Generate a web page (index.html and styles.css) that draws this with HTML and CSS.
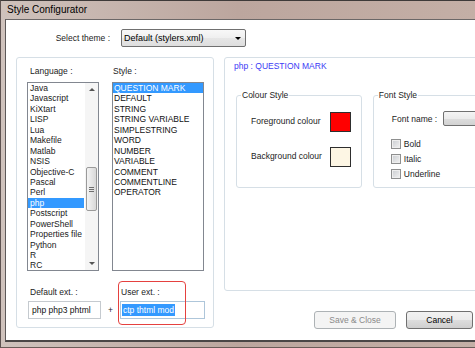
FILE: index.html
```html
<!DOCTYPE html>
<html lang="en">
<head>
  <meta charset="UTF-8" />
  <title>Style Configurator</title>
  <link rel="stylesheet" href="styles.css">
</head>
<body>
  <div class="window">
    <div class="titlebar">Style Configurator</div>
    <div class="client">

      <div class="theme-row">
        <label class="theme-label">Select theme :</label>
        <div class="combo">
          <span>Default (stylers.xml)</span>
          <span class="combo-arrow"></span>
        </div>
      </div>

      <div class="main">
        <div class="panel left-panel">
          <div class="lists">
            <div class="list-label lang-label">Language :</div>
            <div class="list-label style-label">Style :</div>

            <div class="listbox lang-list">
              <ul class="items">
                <li>Java</li>
                <li>Javascript</li>
                <li>KiXtart</li>
                <li>LISP</li>
                <li>Lua</li>
                <li>Makefile</li>
                <li>Matlab</li>
                <li>NSIS</li>
                <li>Objective-C</li>
                <li>Pascal</li>
                <li>Perl</li>
                <li class="sel">php</li>
                <li>Postscript</li>
                <li>PowerShell</li>
                <li>Properties file</li>
                <li>Python</li>
                <li>R</li>
                <li>RC</li>
              </ul>
              <div class="scrollbar">
                <span class="arrow arrow-up"></span>
                <span class="thumb"><span class="grip"></span></span>
                <span class="track-rest"></span>
                <span class="arrow arrow-down"></span>
              </div>
            </div>

            <div class="listbox style-list">
              <ul class="items">
                <li class="sel">QUESTION MARK</li>
                <li>DEFAULT</li>
                <li>STRING</li>
                <li>STRING VARIABLE</li>
                <li>SIMPLESTRING</li>
                <li>WORD</li>
                <li>NUMBER</li>
                <li>VARIABLE</li>
                <li>COMMENT</li>
                <li>COMMENTLINE</li>
                <li>OPERATOR</li>
              </ul>
            </div>
          </div>

          <div class="ext-row">
            <div class="ext ext-default">
              <div class="ext-label">Default ext. :</div>
              <div class="ext-input">php php3 phtml</div>
            </div>
            <div class="plus">+</div>
            <div class="ext ext-user">
              <div class="ext-label">User ext. :</div>
              <div class="ext-input user-input"><span class="selected-text">ctp thtml mod</span></div>
            </div>
          </div>
        </div>

        <div class="right-col">
          <div class="panel right-panel">
            <div class="style-title">php : QUESTION MARK</div>
            <div class="groups">
              <fieldset class="group colour-group">
                <legend>Colour Style</legend>
                <div class="colour-rows">
                  <div class="colour-row">
                    <span class="colour-label">Foreground colour</span>
                    <span class="swatch swatch-fg"></span>
                  </div>
                  <div class="colour-row">
                    <span class="colour-label">Background colour</span>
                    <span class="swatch swatch-bg"></span>
                  </div>
                </div>
              </fieldset>

              <fieldset class="group font-group">
                <legend>Font Style</legend>
                <div class="font-rows">
                  <div class="font-name-row">
                    <span class="font-name-label">Font name :</span>
                    <span class="font-combo"></span>
                  </div>
                  <div class="checks">
                    <div class="check-row"><span class="checkbox"></span>Bold</div>
                    <div class="check-row"><span class="checkbox"></span>Italic</div>
                    <div class="check-row"><span class="checkbox"></span>Underline</div>
                  </div>
                </div>
              </fieldset>
            </div>
          </div>

          <div class="buttons">
            <button class="btn btn-disabled" disabled>Save &amp; Close</button>
            <button class="btn btn-cancel">Cancel</button>
          </div>
        </div>
      </div>

    </div>
  </div>
</body>
</html>
```

FILE: styles.css
```css
html, body {
  margin: 0;
  padding: 0;
}

body {
  width: 475px;
  height: 348px;
  overflow: hidden;
  font-family: "Liberation Sans", Arial, sans-serif;
  font-size: 8.5px;
  color: #1c1c1c;
  background: #c4b0a8;
}

/* window frame (the dialog is wider than the view, so it is clipped) */
.window {
  width: 475px;
  height: 348px;
  overflow: hidden;
  box-sizing: border-box;
  border-top: 1px solid #3e3a39;
  border-left: 1px solid #5d5250;
  border-bottom: 1px solid #6a5c58;
  background: linear-gradient(90deg, #cfc2bc 0%, #bca69e 50%, #c4afa6 100%);
}

.titlebar {
  height: 18px;
  line-height: 18px;
  padding-left: 6px;
  font-size: 10px;
  color: #000;
}

.client {
  height: 320px;
  margin-left: 4px;
  background: #fff;
  border-left: 1px solid #5c5858;
  border-top: 1px solid #6b6767;
  border-bottom: 2px solid #4a4646;
}

/* theme selector */
.theme-row {
  display: flex;
  align-items: center;
  padding-top: 9px;
}

.theme-label {
  width: 104px;
  margin-right: 11px;
  text-align: right;
}

.combo {
  width: 125px;
  height: 18px;
  box-sizing: border-box;
  display: flex;
  align-items: center;
  justify-content: space-between;
  padding: 0 4px 0 2px;
  border: 1px solid #707070;
  border-radius: 2px;
  background: linear-gradient(#f8f8f8, #efefef 50%, #e6e6e6 51%, #dedede);
  font-size: 9px;
  color: #000;
}

.combo-arrow {
  width: 0;
  height: 0;
  border-left: 3px solid transparent;
  border-right: 3px solid transparent;
  border-top: 3px solid #000;
}

/* panels */
.main {
  display: flex;
  gap: 10px;
  margin-top: 10px;
  padding-left: 10px;
}

.panel {
  box-sizing: border-box;
  border: 1px solid #d6dfe6;
  border-radius: 3px;
}

.left-panel {
  flex: none;
  width: 198px;
  height: 271px;
  padding: 7px 0 0 10px;
}

.lists {
  display: grid;
  grid-template-columns: 72px 92px;
  column-gap: 13px;
  row-gap: 5px;
}

.list-label {
  line-height: 12px;
}

.lang-label { padding-left: 3px; }
.style-label { padding-left: 1px; }

.listbox {
  height: 189px;
  box-sizing: border-box;
  border: 1px solid #828790;
  overflow: hidden;
  background: #fff;
}

.lang-list {
  display: flex;
}

.items {
  list-style: none;
  margin: 0;
  padding: 0;
  flex: 1;
}

.items li {
  height: 10.45px;
  line-height: 10.45px;
  white-space: nowrap;
  color: #1a1a1a;
}

.lang-list li {
  padding-left: 2px;
  margin-right: 1px;
}

.style-list li {
  padding-left: 1px;
  color: #111;
}

.items li.sel {
  background: #3399ff;
  color: #fff;
}

/* language list scrollbar */
.scrollbar {
  width: 13px;
  display: flex;
  flex-direction: column;
  align-items: center;
  background: #f5f5f5;
}

.arrow {
  height: 13px;
  width: 13px;
  display: flex;
  align-items: center;
  justify-content: center;
}

.arrow::after {
  content: "";
  width: 0;
  height: 0;
  border-left: 3px solid transparent;
  border-right: 3px solid transparent;
}

.arrow-up::after { border-bottom: 3px solid #555; }
.arrow-down::after { border-top: 3px solid #555; }

.thumb {
  width: 11px;
  height: 44px;
  margin-top: 71px;
  box-sizing: border-box;
  border: 1px solid #9a9a9a;
  border-radius: 2px;
  background: linear-gradient(90deg, #f4f4f4, #e6e6e6 50%, #d8d8d8);
  display: flex;
  align-items: center;
  justify-content: center;
}

.grip {
  width: 5px;
  height: 5px;
  background: repeating-linear-gradient(#6e6e6e 0 1px, transparent 1px 2px);
}

.track-rest {
  flex: 1;
}

/* extension fields */
.ext-row {
  display: flex;
  align-items: flex-end;
  margin-top: 15px;
}

.ext-label {
  line-height: 12px;
  margin-bottom: 3px;
}

.ext-default {
  width: 73px;
  margin-left: 1px;
}

.ext-default .ext-label { padding-left: 2px; }

.ext-input {
  height: 18px;
  box-sizing: border-box;
  border: 1px solid #c5cacf;
  line-height: 16px;
  padding-left: 3px;
  white-space: nowrap;
  color: #111;
}

.plus {
  width: 19px;
  line-height: 18px;
  text-align: center;
}

.ext-user {
  width: 85px;
  position: relative;
}

.ext-user .ext-label { padding-left: 1px; }

.ext-user::before {
  content: "";
  position: absolute;
  left: -2px;
  top: -5px;
  width: 68px;
  height: 44px;
  box-sizing: border-box;
  border: 1px solid #e5413f;
  border-radius: 4px;
  pointer-events: none;
}

.user-input {
  border-color: #aec6da;
  padding-left: 1px;
}

.selected-text {
  display: inline-block;
  line-height: 12px;
  padding: 0 1px;
  background: #3399ff;
  color: #fff;
}

/* style details */
.right-col {
  flex: none;
  width: 300px;
}

.right-panel {
  height: 234px;
  padding: 2px 0 0 9px;
}

.style-title {
  line-height: 12px;
  color: #3b3bf5;
}

.groups {
  display: flex;
  gap: 11px;
  margin: 17px 0 0 2px;
}

.group {
  margin: 0;
  padding: 0;
  min-width: 0;
  border: 1px solid #d6dfe6;
  border-radius: 3px;
}

.group legend {
  margin-left: 4px;
  padding: 0 1px;
  line-height: 12px;
}

.colour-group {
  width: 134px;
  box-sizing: border-box;
}

.colour-rows {
  display: flex;
  flex-direction: column;
  gap: 15px;
  padding: 11px 0 20px 14px;
}

.colour-row {
  display: flex;
  align-items: center;
  height: 20px;
}

.colour-label {
  width: 79px;
  padding-bottom: 3px;
}

.swatch {
  width: 21px;
  height: 20px;
  box-sizing: border-box;
  border: 1px solid #2e2e2e;
}

.swatch-fg { background: #ff0000; }
.swatch-bg { background: #fdf6e4; }

.font-group {
  width: 160px;
  box-sizing: border-box;
}

.font-rows {
  padding: 10px 0 0 18px;
}

.font-name-row {
  display: flex;
  align-items: center;
  height: 15px;
}

.font-name-label {
  width: 52px;
}

.font-combo {
  width: 80px;
  height: 15px;
  box-sizing: border-box;
  border: 1px solid #707070;
  border-radius: 2px;
  background: linear-gradient(#f4f4f4, #ebebeb 50%, #dddddd 51%, #d2d2d2);
}

.checks {
  margin-top: 10px;
}

.check-row {
  display: flex;
  align-items: center;
  height: 15px;
  margin-left: -1px;
}

.checkbox {
  width: 10px;
  height: 10px;
  box-sizing: border-box;
  margin-right: 3px;
  border: 1px solid #8e8f8f;
  background: linear-gradient(135deg, #c9ccd0, #f2f2f2);
  box-shadow: inset 0 0 0 1px #eeeeee;
}

/* dialog buttons */
.buttons {
  display: flex;
  gap: 10px;
  margin-top: 20px;
  padding-left: 90px;
}

.btn {
  height: 18px;
  box-sizing: border-box;
  padding: 0;
  border-radius: 3px;
  font-family: inherit;
  font-size: 8.5px;
}

.btn-disabled {
  width: 82px;
  border: 1px solid #adb2b5;
  background: #f4f4f4;
  color: #8a8a8a;
}

.btn-cancel {
  width: 67px;
  border: 1px solid #707070;
  background: linear-gradient(#f2f2f2, #ebebeb 50%, #dddddd 51%, #cfcfcf);
  color: #000;
}
```
